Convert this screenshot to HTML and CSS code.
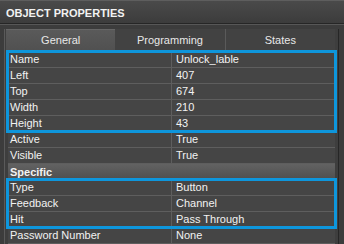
FILE: index.html
```html
<!DOCTYPE html>
<html lang="en">
<head>
    <meta charset="UTF-8">
    <title>Object Properties</title>
    <link rel="stylesheet" href="styles.css">
</head>
<body>
    <div class="panel">
        <div class="title">OBJECT PROPERTIES</div>
        <div class="content">
            <!-- Tabs -->
            <div class="tabs">
                <div class="tab active">General</div>
                <div class="tab">Programming</div>
                <div class="tab sep">States</div>
            </div>

            <!-- Property grid -->
            <div class="grid">
                <div class="group">
                    <div class="row"><div class="key">Name</div><div class="val">Unlock_lable</div></div>
                    <div class="row"><div class="key">Left</div><div class="val">407</div></div>
                    <div class="row"><div class="key">Top</div><div class="val">674</div></div>
                    <div class="row"><div class="key">Width</div><div class="val">210</div></div>
                    <div class="row"><div class="key">Height</div><div class="val">43</div></div>
                </div>
                <div class="row"><div class="key">Active</div><div class="val">True</div></div>
                <div class="row"><div class="key">Visible</div><div class="val">True</div></div>
                <div class="section">Specific</div>
                <div class="group">
                    <div class="row"><div class="key">Type</div><div class="val">Button</div></div>
                    <div class="row"><div class="key">Feedback</div><div class="val">Channel</div></div>
                    <div class="row"><div class="key">Hit</div><div class="val">Pass Through</div></div>
                </div>
                <div class="row"><div class="key">Password Number</div><div class="val">None</div></div>
            </div>
        </div>
    </div>
</body>
</html>
```

FILE: styles.css
```css
/* Pannello proprietà */
body {
    margin: 0;
    background-color: #3a3a3a;
    font-family: "Liberation Sans", Arial, sans-serif;
    font-size: 11px;
    color: #f2f2f2;
}

.panel {
    width: 344px;
    height: 244px;
    overflow: hidden;
    background-color: #3c3c3c;
}

.title {
    height: 22px;
    line-height: 24px;
    padding-left: 6px;
    font-weight: bold;
    background: linear-gradient(#4a4a4a, #3c3c3c);
    border-top: 1px solid #5e5e5e;
    border-bottom: 1px solid #262626;
    box-shadow: 0 1px 0 #575757;
}

.content {
    margin: 5px 5px 0 4px;
    padding: 0 3px 0 2px;
    border-left: 1px solid #5a5a5a;
    border-right: 1px solid #262626;
    background-color: #3e3e3e;
    height: 220px;
}

.tabs {
    display: flex;
    height: 22px;
    margin-left: -1px;
}

.tab {
    flex: 1;
    text-align: center;
    line-height: 22px;
    color: #e8e8e8;
    background-color: #424242;
}

.tab.active {
    background: linear-gradient(#5a5a5a, #505050);
    border-top: 1px solid #666;
    line-height: 21px;
}

.tab.sep {
    border-left: 1px solid #5a5a5a;
}

.grid {
    margin-left: 1px;
    padding-top: 1px;
    background-color: #454545;
}

.group {
    position: relative;
}

/* Cornice blu sopra le righe selezionate */
.group::after {
    content: "";
    position: absolute;
    top: -2px;
    left: -2px;
    right: -2px;
    bottom: -1px;
    border: 3px solid #0e96dc;
    pointer-events: none;
}

.row {
    display: flex;
    height: 15px;
    line-height: 15px;
    border-bottom: 1px solid #5e5e5e;
}

.key {
    width: 161px;
    padding-left: 2px;
    border-right: 1px solid #5e5e5e;
}

.val {
    flex: 1;
    padding-left: 4px;
}

.section {
    height: 16px;
    line-height: 16px;
    padding-left: 2px;
    font-weight: bold;
    background: linear-gradient(#626262, #4e4e4e);
}
```
